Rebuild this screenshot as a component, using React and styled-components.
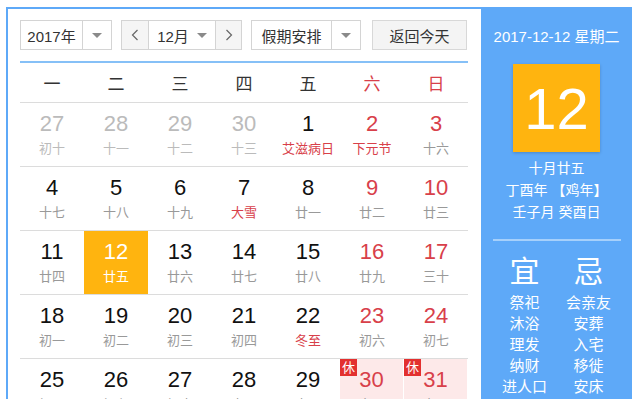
import React from "react";
import styled, { createGlobalStyle } from "styled-components";

const GlobalStyle = createGlobalStyle`
    body {
        margin: 0;
        background: #fff;
        font-family: "Liberation Sans", "Noto Sans CJK SC", sans-serif;
    }
`

const BLUE = "#5ea9f8";
const RED = "#d8404a";

const Frame = styled.div`
    display: flex;
    width: 624px;
    margin: 7px 0 0 6px;
    border-top: 2px solid ${BLUE};
    border-left: 2px solid ${BLUE};
`

const Main = styled.div`
    width: 448px;
    padding: 11px 13px 0 12px;
`

const Toolbar = styled.div`
    display: flex;
    height: 30px;
`

const Select = styled.div`
    display: flex;
    width: ${p => p.w}px;
    margin-right: ${p => p.gap}px;
    border: 1px solid #d4d4d4;
    box-sizing: border-box;
    font-size: 15px;
    color: #333;
`

const SelectText = styled.div`
    flex: 1;
    display: flex;
    align-items: center;
    justify-content: center;
`

const Caret = styled.div`
    width: 28px;
    border-left: 1px solid #d4d4d4;
    display: flex;
    align-items: center;
    justify-content: center;
    &::after {
        content: "";
        border-left: 5px solid transparent;
        border-right: 5px solid transparent;
        border-top: 5px solid #8a8a8a;
    }
`

const InlineCaret = styled.span`
    margin-left: 8px;
    border-left: 5px solid transparent;
    border-right: 5px solid transparent;
    border-top: 5px solid #8a8a8a;
`

const StepBtn = styled.div`
    width: ${p => p.w}px;
    background: #f5f5f5;
    display: flex;
    align-items: center;
    justify-content: center;
    border-${p => p.side}: 1px solid #d4d4d4;
`

const TodayBtn = styled.div`
    width: 95px;
    border: 1px solid #d8d8d8;
    box-sizing: border-box;
    background: #f4f4f4;
    display: flex;
    align-items: center;
    justify-content: center;
    font-size: 15px;
    color: #333;
`

const Rule = styled.div`
    height: 2px;
    background: #86c0f7;
    margin-top: 11px;
`

const WeekHead = styled.div`
    display: grid;
    grid-template-columns: repeat(7, 64px);
    height: 39px;
    align-items: center;
`

const WeekDay = styled.div`
    text-align: center;
    font-size: 17px;
    color: ${p => p.weekend ? RED : "#333"};
`

const Row = styled.div`
    display: grid;
    grid-template-columns: repeat(7, 64px);
    height: 63px;
    border-top: 1px solid #dcdcdc;
`

const Cell = styled.div`
    position: relative;
    display: flex;
    flex-direction: column;
    align-items: center;
    padding-top: 8px;
    box-sizing: border-box;
    background: ${p => p.today ? "#ffb40f" : p.rest ? "#fde9e9" : "transparent"};
    border-right: ${p => p.rest ? "1px solid #fff" : "none"};
`

const DayNum = styled.div`
    font-size: 22px;
    line-height: 26px;
    color: ${p => p.color};
`

const Lunar = styled.div`
    margin-top: 3px;
    font-size: 13px;
    line-height: 18px;
    color: ${p => p.color};
`

const RestBadge = styled.span`
    position: absolute;
    left: 0;
    top: 0;
    width: 17px;
    height: 17px;
    background: #e3302f;
    color: #fff;
    font-size: 13px;
    line-height: 17px;
    text-align: center;
`

const Side = styled.div`
    width: 151px;
    margin-top: -2px;
    background: ${BLUE};
    color: #fff;
    display: flex;
    flex-direction: column;
    align-items: center;
    height: 420px;
`

const SideDate = styled.div`
    margin-top: 20px;
    font-size: 15px;
    line-height: 20px;
`

const BigDay = styled.div`
    width: 87px;
    height: 88px;
    margin-top: 17px;
    background: #ffb40f;
    box-shadow: 0 1px 3px rgba(0,0,0,0.2);
    display: flex;
    align-items: center;
    justify-content: center;
    font-size: 58px;
`

const LunarInfo = styled.div`
    margin-top: 5px;
    font-size: 14px;
    line-height: 22px;
    text-align: center;
`

const SideRule = styled.div`
    width: 128px;
    height: 2px;
    margin-top: 16px;
    background: #a6d0fb;
`

const Columns = styled.div`
    display: grid;
    grid-template-columns: 64px 64px;
    margin-top: 13px;
`

const Column = styled.div`
    display: flex;
    flex-direction: column;
    align-items: center;
`

const ColHead = styled.div`
    font-size: 30px;
    line-height: 36px;
    margin-bottom: 2px;
`

const ColItem = styled.div`
    font-size: 15px;
    line-height: 21px;
`

const Chevron = ({ dir }) => (
    <svg width="8" height="12" viewBox="0 0 8 12">
        <path d={dir === "left" ? "M6.5 1 L1.5 6 L6.5 11" : "M1.5 1 L6.5 6 L1.5 11"} fill="none" stroke="#666" strokeWidth="1.2" />
    </svg>
);

// [day, lunar, flags]: o = other month, f = festival, t = today, r = rest
const weeks = [
    [["27", "初十", "o"], ["28", "十一", "o"], ["29", "十二", "o"], ["30", "十三", "o"], ["1", "艾滋病日", "f"], ["2", "下元节", "f"], ["3", "十六", ""]],
    [["4", "十七", ""], ["5", "十八", ""], ["6", "十九", ""], ["7", "大雪", "f"], ["8", "廿一", ""], ["9", "廿二", ""], ["10", "廿三", ""]],
    [["11", "廿四", ""], ["12", "廿五", "t"], ["13", "廿六", ""], ["14", "廿七", ""], ["15", "廿八", ""], ["16", "廿九", ""], ["17", "三十", ""]],
    [["18", "初一", ""], ["19", "初二", ""], ["20", "初三", ""], ["21", "初四", ""], ["22", "冬至", "f"], ["23", "初六", ""], ["24", "初七", ""]],
    [["25", "初八", ""], ["26", "初九", ""], ["27", "初十", ""], ["28", "十一", ""], ["29", "十二", ""], ["30", "十三", "r"], ["31", "十四", "r"]],
];

const weekNames = ["一", "二", "三", "四", "五", "六", "日"];

const good = ["祭祀", "沐浴", "理发", "纳财", "进人口"];
const bad = ["会亲友", "安葬", "入宅", "移徙", "安床"];

export default function App() {
    return (
        <>
            <GlobalStyle />
            <Frame>
                <Main>
                    <Toolbar>
                        <Select w={92} gap={9}>
                            <SelectText>2017年</SelectText>
                            <Caret />
                        </Select>
                        <Select w={121} gap={9}>
                            <StepBtn w={26} side="right"><Chevron dir="left" /></StepBtn>
                            <SelectText>12月<InlineCaret /></SelectText>
                            <StepBtn w={25} side="left"><Chevron dir="right" /></StepBtn>
                        </Select>
                        <Select w={110} gap={11}>
                            <SelectText>假期安排</SelectText>
                            <Caret />
                        </Select>
                        <TodayBtn>返回今天</TodayBtn>
                    </Toolbar>
                    <Rule />
                    <WeekHead>
                        {weekNames.map((w, i) => (
                            <WeekDay key={w} weekend={i >= 5}>{w}</WeekDay>
                        ))}
                    </WeekHead>
                    {weeks.map((week, wi) => (
                        <Row key={wi}>
                            {week.map(([d, l, f], i) => {
                                const other = f === "o";
                                const today = f === "t";
                                const weekend = i >= 5;
                                const numColor = today ? "#fff" : other ? "#bbb" : weekend ? RED : "#111";
                                const lunarColor = today ? "#fff" : other ? "#bbb" : f === "f" ? RED : "#999";
                                return (
                                    <Cell key={i} today={today} rest={f === "r"}>
                                        {f === "r" && <RestBadge>休</RestBadge>}
                                        <DayNum color={numColor}>{d}</DayNum>
                                        <Lunar color={lunarColor}>{l}</Lunar>
                                    </Cell>
                                );
                            })}
                        </Row>
                    ))}
                </Main>
                <Side>
                    <SideDate>2017-12-12 星期二</SideDate>
                    <BigDay>12</BigDay>
                    <LunarInfo>
                        <div>十月廿五</div>
                        <div>丁酉年 【鸡年】</div>
                        <div>壬子月 癸酉日</div>
                    </LunarInfo>
                    <SideRule />
                    <Columns>
                        <Column>
                            <ColHead>宜</ColHead>
                            {good.map(g => <ColItem key={g}>{g}</ColItem>)}
                        </Column>
                        <Column>
                            <ColHead>忌</ColHead>
                            {bad.map(b => <ColItem key={b}>{b}</ColItem>)}
                        </Column>
                    </Columns>
                </Side>
            </Frame>
        </>
    );
}
